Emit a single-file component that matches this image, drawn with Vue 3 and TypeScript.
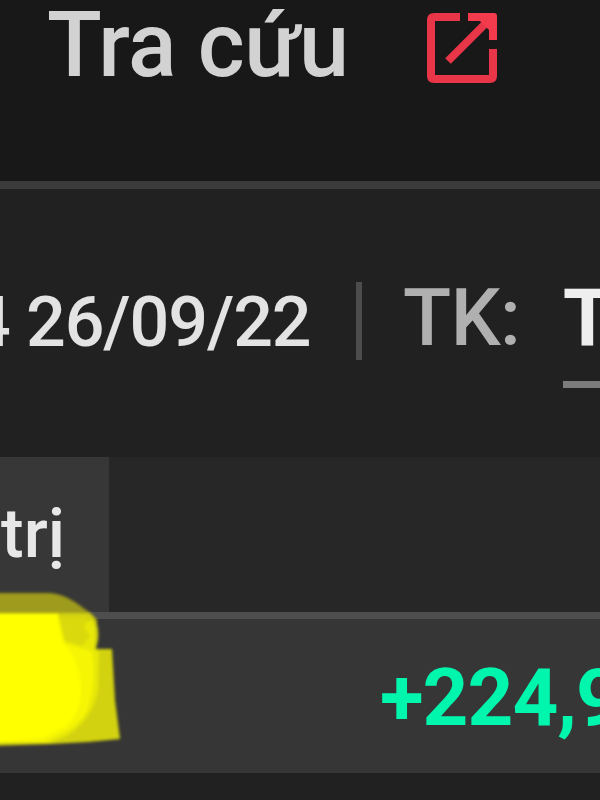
<script setup lang="ts">
const lookupLabel: string = 'Tra cứu'
const dateText: string = '4 26/09/22'
const accountLabel: string = 'TK:'
const accountValue: string = 'T'
const activeTab: string = 'trị'
const profit: string = '+224,9'
</script>

<template>
  <main class="screen">
    <header class="top">
      <span class="lookup">{{ lookupLabel }}</span>
      <svg class="open-icon" viewBox="0 0 72 72" aria-hidden="true">
        <path d="M34 5H8Q5 5 5 8V64Q5 67 8 67H64Q67 67 67 64V37" />
        <path d="M22 49L61 10" />
        <path class="head" d="M42 1H68Q71 1 71 4V28H63V18L54 9H42Z" />
      </svg>
    </header>
    <section class="info">
      <span class="date">{{ dateText }}</span>
      <span class="divider"></span>
      <span class="label">{{ accountLabel }}</span>
      <span class="account">{{ accountValue }}</span>
    </section>
    <nav class="tabs">
      <div class="tab"><span>{{ activeTab }}</span></div>
    </nav>
    <section class="result">
      <span class="profit">{{ profit }}</span>
    </section>
    <svg class="marker" viewBox="-10 0 140 170" aria-hidden="true">
      <path fill="#9f9b1c" d="M-10 13H50C68 15 76 23 89 32L97 39V54H-10Z" />
      <path fill="#d2d210" d="M-10 33H90Q100 42 98 60L96 69H112L115 120L120 159Q85 163 50 164L-10 166Z" />
      <path fill="#e8e808" d="M-10 33H58L60 48L92 40Q97 50 94 68L99 72L98 110Q93 138 68 155L50 163H-10Z" />
      <path fill="#d9d90d" d="M58 37H88L84 48L90 56L82 66L64 60Z" />
      <path fill="#f6f604" d="M-10 34H58L65 63L92 72Q97 103 87 130Q80 145 60 154L45 162H-10Z" />
      <path fill="#ffff00" d="M-10 34H57L62 62Q75 74 80 98Q85 128 66 146L42 158L-10 163Z" />
    </svg>
  </main>
</template>

<style>
body {
  margin: 0;
  background: #212121;
}
</style>

<style scoped>
.screen {
  position: relative;
  width: 600px;
  height: 800px;
  overflow: hidden;
  background: #212121;
  font-family: Roboto, sans-serif;
  font-weight: 500;
  white-space: nowrap;
}
.top {
  box-sizing: border-box;
  display: flex;
  align-items: flex-start;
  height: 189px;
  padding-left: 47px;
  background: #181818;
  border-bottom: 8px solid #3b3b3b;
}
.lookup {
  width: 379px;
  font-size: 90px;
  line-height: 91px;
  letter-spacing: -0.5px;
  color: #d2d2d2;
}
.open-icon {
  width: 72px;
  height: 72px;
  margin-top: 12px;
  fill: none;
  stroke: #e83547;
  stroke-width: 8;
}
.open-icon .head {
  fill: #f43b4d;
  stroke: none;
}
.info {
  box-sizing: border-box;
  display: flex;
  align-items: flex-start;
  height: 268px;
  padding-top: 93px;
  background: #212121;
}
.info span {
  flex: none;
}
.date {
  width: 385px;
  margin-left: -29px;
  font-size: 70px;
  line-height: 80px;
  letter-spacing: -1.1px;
  color: #e3e3e3;
}
.divider {
  width: 6px;
  height: 78px;
  background: #4c4c4c;
}
.label {
  width: 161px;
  padding-left: 41px;
  font-size: 79px;
  line-height: 73px;
  letter-spacing: -0.5px;
  color: #b0b0b0;
}
.account {
  width: 80px;
  height: 98px;
  font-size: 79px;
  line-height: 73px;
  margin-left: -1px;
  font-weight: 700;
  color: #eeeeee;
  padding-top: 1px;
  border-bottom: 7px solid #7c7c7c;
}
.tabs {
  box-sizing: border-box;
  height: 162px;
  background: #272727;
  border-bottom: 7px solid #4e4e4e;
}
.tab {
  box-sizing: border-box;
  width: 109px;
  height: 155px;
  padding: 37px 0 0 1px;
  background: #373737;
  font-size: 68px;
  line-height: 80px;
  color: #e8e8e8;
}
.result {
  box-sizing: border-box;
  height: 154px;
  padding: 35px 0 0 380px;
  background: #363636;
}
.profit {
  display: block;
  font-size: 80px;
  line-height: 88px;
  font-weight: 700;
  letter-spacing: -1px;
  color: #00f5ad;
}
.marker {
  position: absolute;
  left: -10px;
  top: 580px;
  width: 140px;
  height: 170px;
  filter: blur(1.5px);
}
</style>
